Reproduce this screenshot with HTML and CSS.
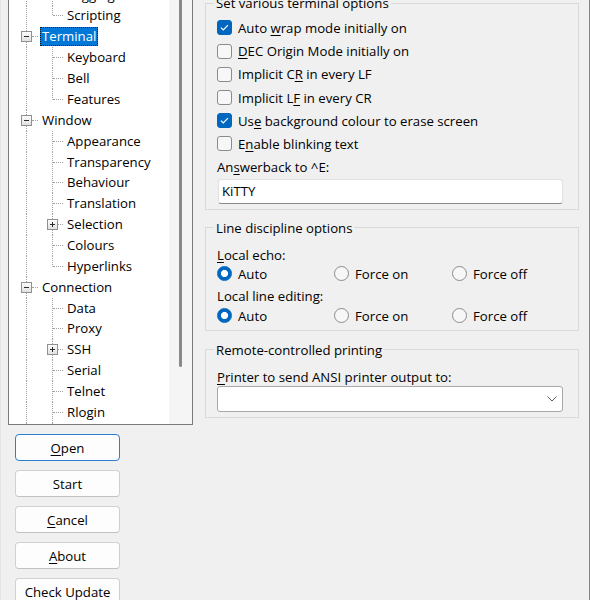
FILE: index.html
```html
<!DOCTYPE html>
<html lang="en">
<head>
    <meta charset="UTF-8">
    <meta name="viewport" content="width=device-width, initial-scale=1.0">
    <title>KiTTY Configuration</title>
    <link rel="stylesheet" href="styles.css">
</head>
<body>
    <div class="dialog">
        <div class="left">
            <div class="tree">
                <div class="rows">
                    <div class="node child"><i class="elbow"></i><span class="label">Logging</span></div>
                    <div class="node child last"><i class="elbow"></i><span class="label">Scripting</span></div>
                    <div class="node top"><svg class="exp" viewBox="0 0 11 11"><rect x=".5" y=".5" width="10" height="10"/><path d="M3 5.5h5"/></svg><i class="elbow"></i><span class="label selected">Terminal</span></div>
                    <div class="node child"><i class="elbow"></i><span class="label">Keyboard</span></div>
                    <div class="node child"><i class="elbow"></i><span class="label">Bell</span></div>
                    <div class="node child last"><i class="elbow"></i><span class="label">Features</span></div>
                    <div class="node top"><svg class="exp" viewBox="0 0 11 11"><rect x=".5" y=".5" width="10" height="10"/><path d="M3 5.5h5"/></svg><i class="elbow"></i><span class="label">Window</span></div>
                    <div class="node child"><i class="elbow"></i><span class="label">Appearance</span></div>
                    <div class="node child"><i class="elbow"></i><span class="label">Transparency</span></div>
                    <div class="node child"><i class="elbow"></i><span class="label">Behaviour</span></div>
                    <div class="node child"><i class="elbow"></i><span class="label">Translation</span></div>
                    <div class="node child branch"><svg class="exp" viewBox="0 0 11 11"><rect x=".5" y=".5" width="10" height="10"/><path d="M3 5.5h5M5.5 3v5"/></svg><i class="elbow"></i><span class="label">Selection</span></div>
                    <div class="node child"><i class="elbow"></i><span class="label">Colours</span></div>
                    <div class="node child last"><i class="elbow"></i><span class="label">Hyperlinks</span></div>
                    <div class="node top"><svg class="exp" viewBox="0 0 11 11"><rect x=".5" y=".5" width="10" height="10"/><path d="M3 5.5h5"/></svg><i class="elbow"></i><span class="label">Connection</span></div>
                    <div class="node child"><i class="elbow"></i><span class="label">Data</span></div>
                    <div class="node child"><i class="elbow"></i><span class="label">Proxy</span></div>
                    <div class="node child branch"><svg class="exp" viewBox="0 0 11 11"><rect x=".5" y=".5" width="10" height="10"/><path d="M3 5.5h5M5.5 3v5"/></svg><i class="elbow"></i><span class="label">SSH</span></div>
                    <div class="node child"><i class="elbow"></i><span class="label">Serial</span></div>
                    <div class="node child"><i class="elbow"></i><span class="label">Telnet</span></div>
                    <div class="node child"><i class="elbow"></i><span class="label">Rlogin</span></div>
                    <div class="node child"></div>
                </div>
                <div class="scrollbar"><div class="thumb"></div></div>
            </div>

            <div class="buttons">
                <button class="btn default"><u>O</u>pen</button>
                <button class="btn">Start</button>
                <button class="btn"><u>C</u>ancel</button>
                <button class="btn"><u>A</u>bout</button>
                <button class="btn">Check Update</button>
            </div>
        </div>

        <div class="right">
            <fieldset class="group">
                <legend>Set various terminal options</legend>
                <div class="check"><span class="box on"><svg viewBox="0 0 15 15"><path d="M3.4 7.6l2.7 2.7 5.4-5.6"/></svg></span><span>Auto <u>w</u>rap mode initially on</span></div>
                <div class="check"><span class="box"></span><span><u>D</u>EC Origin Mode initially on</span></div>
                <div class="check"><span class="box"></span><span>Implicit C<u>R</u> in every LF</span></div>
                <div class="check"><span class="box"></span><span>Implicit L<u>F</u> in every CR</span></div>
                <div class="check"><span class="box on"><svg viewBox="0 0 15 15"><path d="M3.4 7.6l2.7 2.7 5.4-5.6"/></svg></span><span>Us<u>e</u> background colour to erase screen</span></div>
                <div class="check"><span class="box"></span><span>E<u>n</u>able blinking text</span></div>
                <div class="field-label">An<u>s</u>werback to ^E:</div>
                <div class="text">KiTTY</div>
            </fieldset>

            <fieldset class="group spaced">
                <legend>Line discipline options</legend>
                <div class="field-label"><u>L</u>ocal echo:</div>
                <div class="radios">
                    <span class="radio"><span class="dot on"></span><span>Auto</span></span>
                    <span class="radio"><span class="dot"></span><span>Force on</span></span>
                    <span class="radio"><span class="dot"></span><span>Force off</span></span>
                </div>
                <div class="field-label second">Local line editing:</div>
                <div class="radios last">
                    <span class="radio"><span class="dot on"></span><span>Auto</span></span>
                    <span class="radio"><span class="dot"></span><span>Force on</span></span>
                    <span class="radio"><span class="dot"></span><span>Force off</span></span>
                </div>
            </fieldset>

            <fieldset class="group spaced printing">
                <legend>Remote-controlled printing</legend>
                <div class="field-label"><u>P</u>rinter to send ANSI printer output to:</div>
                <div class="combo"><svg width="10" height="6" viewBox="0 0 10 6"><path d="M.5 .5l4.5 4.5 4.5-4.5"/></svg></div>
            </fieldset>
        </div>
    </div>
</body>
</html>
```

FILE: styles.css
```css
* {
    box-sizing: border-box;
}
body {
    margin: 0;
    background-color: #f0f0f0;
    font-family: "Segoe UI", "Open Sans", sans-serif;
    font-size: 13.2px;
    color: #000;
}
u {
    text-underline-offset: 2px;
}
.dialog {
    display: flex;
    gap: 12px;
    width: 590px;
    height: 600px;
    padding-left: 7px;
    border-left: 1px solid #e4e4e4;
    border-right: 1px solid #858585;
    overflow: hidden;
}

/* tree */
.left {
    width: 185px;
    flex: none;
}
.tree {
    display: flex;
    height: 441.3px;
    margin-top: -16.3px;
    background-color: #fff;
    border: 1px solid #7a7a7a;
}
.rows {
    flex: 1;
    overflow: hidden;
}
.scrollbar {
    width: 23px;
    flex: none;
    display: flex;
    justify-content: center;
    background-color: #f5f5f5;
}
.thumb {
    width: 3px;
    height: 382.3px;
    background-color: #8a8a8a;
    border-radius: 2px;
}
.node {
    --dots: repeating-linear-gradient(#a0a0a0 0 1px, transparent 1px 2px);
    display: flex;
    align-items: center;
    height: 20.87px;
    padding-left: 44px;
    background: var(--dots) 17px 0 / 1px 100% no-repeat;
}
.node.child {
    background: var(--dots) 17px 0 / 1px 100% no-repeat,
                var(--dots) 43px 0 / 1px 100% no-repeat;
}
.node.child.last {
    background: var(--dots) 17px 0 / 1px 100% no-repeat,
                var(--dots) 43px 0 / 1px 50% no-repeat;
}
.node.top {
    padding-left: 12px;
}
.node.branch {
    padding-left: 38px;
}
.elbow {
    width: 10px;
    flex: none;
    border-top: 1px dotted #a0a0a0;
}
.top .elbow {
    width: 6px;
}
.branch .elbow {
    width: 5px;
}
.exp {
    width: 11px;
    height: 11px;
    flex: none;
    background: linear-gradient(#ffffff, #dedede);
}
.exp rect {
    fill: none;
    stroke: #919191;
}
.exp path {
    stroke: #2b2b2b;
}
.label {
    margin-left: 2px;
    padding: 0 1px;
    border: 1px dotted transparent;
    line-height: 17px;
    white-space: nowrap;
}
.label.selected {
    background-color: #0078d7;
    color: #fff;
    border-color: #1b1b1b;
}

/* buttons */
.buttons {
    display: flex;
    flex-direction: column;
    gap: 9px;
    margin-top: 9px;
    padding-left: 7px;
}
.btn {
    width: 105px;
    height: 27px;
    padding: 0;
    font: inherit;
    color: #000;
    background-color: #fdfdfd;
    border: 1px solid #d0d0d0;
    border-bottom-color: #c2c2c2;
    border-radius: 4px;
}
.btn.default {
    border-color: #2a7fd0;
}

/* right side */
.right {
    width: 374px;
    flex: none;
    margin-top: -6px;
}
.group {
    margin: 0;
    padding: 4.4px 15px 5px 11px;
    border: 1px solid #d9d9d9;
    min-inline-size: 0;
}
.group legend {
    margin-left: -3px;
    padding: 0 2px;
    line-height: 18px;
}
.group.spaced {
    margin-top: 9px;
    padding-top: 9px;
    padding-bottom: 4px;
}
.group.printing {
    margin-top: 10px;
    padding-bottom: 5px;
}
.check {
    display: flex;
    align-items: center;
    gap: 6px;
    height: 23.2px;
    white-space: nowrap;
}
.box {
    width: 15px;
    height: 15px;
    flex: none;
    border: 1px solid #8b8b8b;
    border-radius: 3px;
    background-color: #f7f7f7;
}
.box.on {
    background-color: #0067c0;
    border-color: #0067c0;
}
.box svg {
    display: block;
    width: 13px;
    height: 13px;
}
.box path {
    fill: none;
    stroke: #fff;
    stroke-width: 1.4;
}
.field-label {
    line-height: 18px;
}
.check + .field-label {
    margin-top: 1px;
    line-height: 20px;
}
.field-label.second {
    margin-top: 3px;
}
.text {
    margin-top: 2.4px;
    margin-left: 1px;
    height: 25px;
    padding-left: 3px;
    line-height: 23px;
    background-color: #fff;
    border: 1px solid #e0e0e0;
    border-bottom-color: #8a8a8a;
    border-radius: 3px;
}
.radios {
    display: grid;
    grid-template-columns: 117px 118px 1fr;
    height: 20px;
}
.radios.last {
    margin-top: 1px;
}
.radio {
    display: flex;
    align-items: center;
    gap: 6px;
}
.dot {
    width: 15px;
    height: 15px;
    flex: none;
    border: 1px solid #8b8b8b;
    border-radius: 50%;
    background-color: #f7f7f7;
}
.dot.on {
    border-color: #0067c0;
    background: radial-gradient(circle, #fff 0 3.2px, #0067c0 3.9px);
}
.combo {
    display: flex;
    align-items: center;
    justify-content: flex-end;
    height: 26px;
    padding-right: 5px;
    background-color: #fff;
    border: 1px solid #a8a8a8;
    border-radius: 3px;
}
.combo path {
    fill: none;
    stroke: #5a5a5a;
}
```
